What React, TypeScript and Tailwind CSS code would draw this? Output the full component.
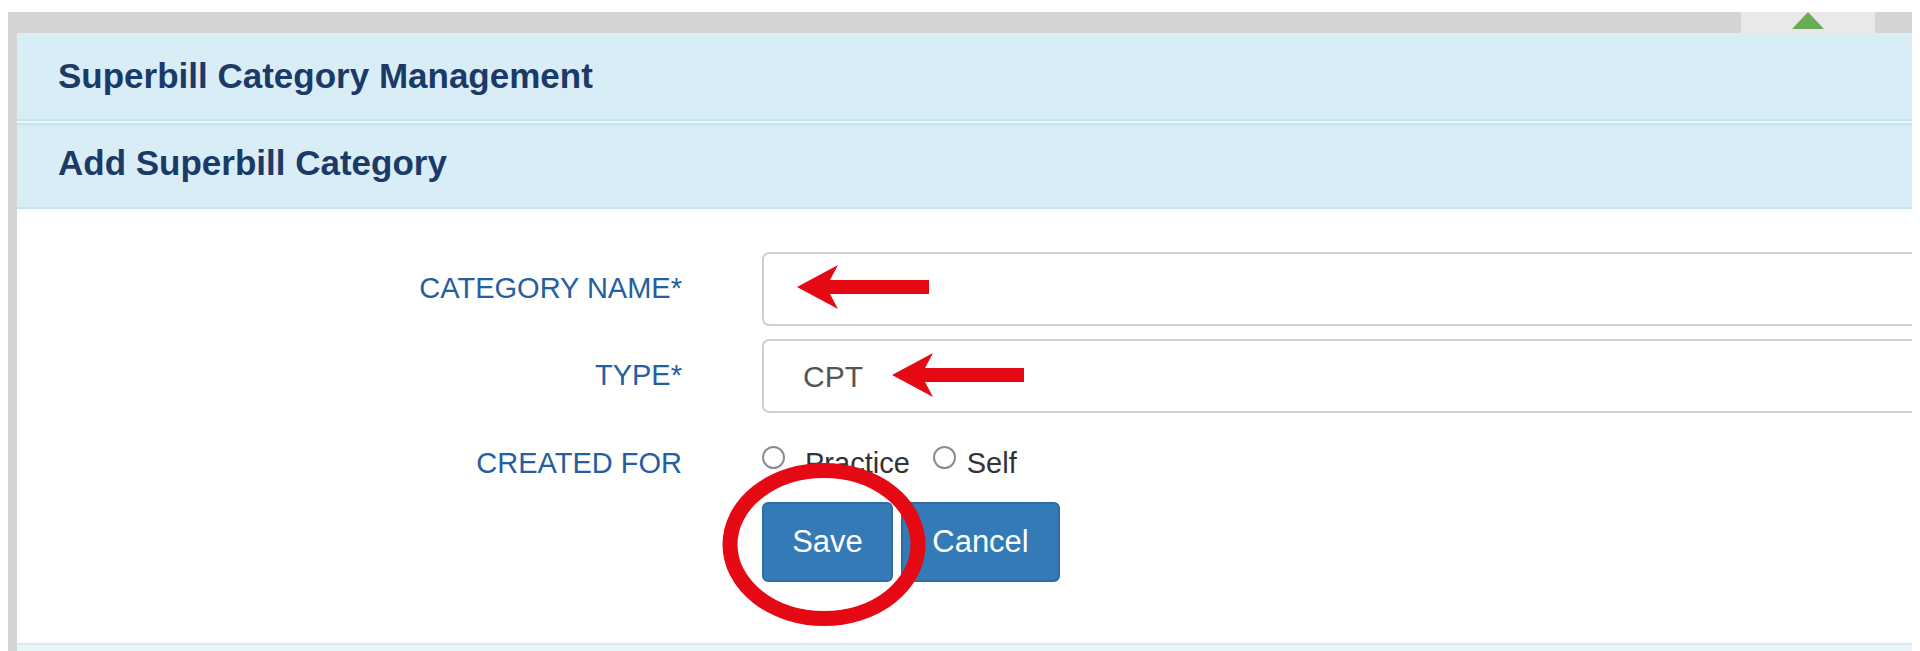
import * as React from "react";

// annotation red used for the arrows and the circle drawn over the form
const MARK_RED = "#e50914";

function RedArrow({ className }: { className?: string }) {
  return (
    <svg
      className={className}
      width="132"
      height="44"
      viewBox="0 0 132 44"
      aria-hidden
    >
      <polygon
        points="0,22 41,0 33,15 132,15 132,29 33,29 41,44"
        fill={MARK_RED}
      />
    </svg>
  );
}

function Radio({ label, className }: { label: string; className?: string }) {
  return (
    <label className={`flex items-center text-[29px] text-[#333] ${className ?? ""}`}>
      <span className="mb-[14px] h-[23px] w-[23px] shrink-0 rounded-full border-[2px] border-[#8c8c8c] bg-white" />
      <span className="ml-[var(--gap)]">{label}</span>
    </label>
  );
}

function FormRow({
  label,
  children,
}: {
  label: string;
  children: React.ReactNode;
}) {
  return (
    <div className="flex items-center">
      <div className="w-[665px] shrink-0 text-right text-[29px] text-[#24609f]">
        {label}
      </div>
      <div className="ml-[80px] flex-1">{children}</div>
    </div>
  );
}

export default function App() {
  return (
    <div className="relative h-[651px] w-[1920px] overflow-hidden bg-white font-['Liberation_Sans',Arial,sans-serif]">
      <div className="ml-[8px] mt-[12px] flex h-[639px] w-[1904px] flex-col bg-[#d4d4d4]">
        {/* collapse toggle strip */}
        <div className="flex h-[21px] shrink-0 justify-end pr-[37px]">
          <div className="flex h-[21px] w-[134px] justify-center bg-[#e9e9e9]">
            <svg width="32" height="17" viewBox="0 0 32 17" aria-hidden>
              <polygon points="16,0 32,17 0,17" fill="#6aab55" />
            </svg>
          </div>
        </div>

        <div className="flex min-h-0 flex-1 pl-[9px]">
          <div className="flex min-w-0 flex-1 flex-col overflow-hidden bg-[#eaf5fa]">
            <div className="flex h-[88px] shrink-0 items-center border-b-2 border-[#c4e4ef] bg-[#d9edf7] pl-[41px]">
              <h1 className="text-[35px] font-bold text-[#1b3a67]">
                Superbill Category Management
              </h1>
            </div>
            <div className="h-[2px] shrink-0 bg-[#eef7fb]" />
            <div className="flex h-[86px] shrink-0 items-center border-y-2 border-[#c4e4ef] bg-[#d9edf7] pb-[6px] pl-[41px]">
              <h2 className="text-[35px] font-bold text-[#1b3a67]">
                Add Superbill Category
              </h2>
            </div>

            {/* form body */}
            <div className="flex h-[436px] shrink-0 flex-col border-b-2 border-[#d3e9f3] bg-white pt-[43px]">
              <FormRow label="CATEGORY NAME*">
                <div className="h-[74px] w-[1300px] rounded-[7px] border-2 border-[#cfcfcf] bg-white" />
              </FormRow>
              <div className="mt-[13px]">
                <FormRow label="TYPE*">
                  <div className="flex h-[74px] w-[1300px] items-center rounded-[7px] border-2 border-[#cfcfcf] bg-white pl-[39px] text-[30px] text-[#555]">
                    CPT
                  </div>
                </FormRow>
              </div>
              <div className="mt-[29px]">
                <FormRow label="CREATED FOR">
                  <div className="flex h-[44px] items-center">
                    <Radio label="Practice" className="mr-[23px] [--gap:20px]" />
                    <Radio label="Self" className="[--gap:11px]" />
                  </div>
                </FormRow>
              </div>
              <div className="ml-[745px] mt-[16px] flex gap-[8px]">
                <button className="h-[80px] w-[131px] rounded-[6px] border-2 border-[#2e6da4] bg-[#337ab7] text-[31px] text-white">
                  Save
                </button>
                <button className="h-[80px] w-[159px] rounded-[6px] border-2 border-[#2e6da4] bg-[#337ab7] text-[31px] text-white">
                  Cancel
                </button>
              </div>
            </div>
          </div>
        </div>
      </div>

      {/* screenshot annotations */}
      <RedArrow className="absolute left-[797px] top-[265px]" />
      <RedArrow className="absolute left-[892px] top-[353px]" />
      <svg
        className="absolute left-[722px] top-[463px]"
        width="204"
        height="163"
        viewBox="0 0 204 163"
        aria-hidden
      >
        <ellipse
          cx="102"
          cy="81.5"
          rx="94"
          ry="74"
          fill="none"
          stroke={MARK_RED}
          strokeWidth="15"
        />
      </svg>
    </div>
  );
}
